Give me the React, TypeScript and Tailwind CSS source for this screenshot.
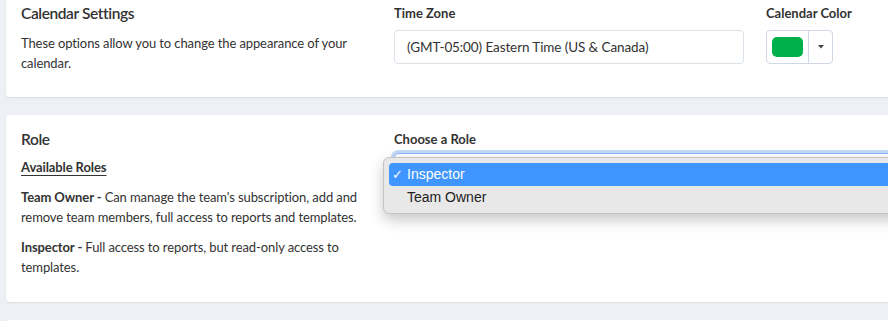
import React from "react";

export default function App() {
  return (
    <div className="w-[888px] h-[321px] overflow-hidden bg-[#edf0f4] text-[#363636] font-['Lato','Noto_Sans',sans-serif]">
      <div className="ml-[6px] w-[940px] flex flex-col gap-[18px] -mt-[20px]">
        {/* Calendar Settings card */}
        <div className="bg-white rounded-[4px] shadow-[0_1px_2px_rgba(0,0,0,0.08)] pt-[21px] pb-[24px] flex">
          <div className="w-[373px] pl-[15px]">
            <div className="text-[15.5px] leading-[24px] font-semibold tracking-[-0.4px] text-[#333]">Calendar Settings</div>
            <div className="mt-[8px] text-[13px] leading-[20px] tracking-[-0.1px] text-[#333]">
              <div className="whitespace-nowrap">These options allow you to change the appearance of your</div>
              <div className="whitespace-nowrap">calendar.</div>
            </div>
          </div>
          <div className="ml-[15px] w-[350px]">
            <div className="text-[13px] leading-[24px] font-bold text-[#333]">Time Zone</div>
            <div className="mt-[5px] h-[34px] border border-[#dce2e9] rounded-[4px] flex items-center pl-[12px] text-[13.5px] tracking-[-0.1px] text-[#333]">
              (GMT-05:00) Eastern Time (US &amp; Canada)
            </div>
          </div>
          <div className="ml-[22px]">
            <div className="text-[13px] leading-[24px] font-bold text-[#333]">Calendar Color</div>
            <div className="mt-[5px] h-[34px] w-[67px] border border-[#cfd8e3] rounded-[4px] flex items-center">
              <div className="ml-[5px] w-[31px] h-[20px] rounded-[5px] bg-[#00b04a]"></div>
              <div className="ml-[5px] h-full w-px bg-[#cfd8e3]"></div>
              <div className="flex-1 flex justify-center">
                <svg width="6" height="4" viewBox="0 0 6 4"><path d="M0 0 L6 0 L3 3.5 Z" fill="#444" /></svg>
              </div>
            </div>
          </div>
        </div>

        {/* Role card */}
        <div className="bg-white rounded-[4px] shadow-[0_1px_2px_rgba(0,0,0,0.08)] pt-[12px] pb-[25px] flex">
          <div className="w-[373px] pl-[15px]">
            <div className="text-[15.5px] leading-[24px] font-semibold tracking-[-0.4px] text-[#333]">Role</div>
            <div className="mt-[6px] text-[13px] leading-[20px] tracking-[-0.1px] text-[#333]">
              <div className="font-bold underline underline-offset-[3px]">Available Roles</div>
              <div className="mt-[10px]">
                <div className="whitespace-nowrap"><b>Team Owner -</b> Can manage the team's subscription, add and</div>
                <div className="whitespace-nowrap">remove team members, full access to reports and templates.</div>
              </div>
              <div className="mt-[10px]">
                <div className="whitespace-nowrap"><b>Inspector -</b> Full access to reports, but read-only access to</div>
                <div className="whitespace-nowrap">templates.</div>
              </div>
            </div>
          </div>
          <div className="ml-[15px] flex-1 relative">
            <div className="text-[13px] leading-[24px] font-bold text-[#333]">Choose a Role</div>
            <div className="mt-[2px] h-[34px] border border-[#86b7fe] rounded-[4px] shadow-[0_0_0_3px_rgba(120,170,235,0.45)]"></div>
            {/* Native select popup */}
            <div className="absolute left-[-11px] top-[30px] w-[600px] h-[57px] bg-[#e8e8e8] border border-[#c4c4c4] rounded-[6px] shadow-[0_6px_14px_rgba(0,0,0,0.22)] pt-[5px] px-[5px] font-['Liberation_Sans',Arial,sans-serif] text-[14px]">
              <div className="h-[23px] rounded-[4px] bg-[#3f96fe] text-white flex items-center">
                <span className="w-[18px] pl-[3px] text-[13px]">✓</span>
                <span>Inspector</span>
              </div>
              <div className="h-[23px] flex items-center pl-[18px] text-[#222]">Team Owner</div>
            </div>
          </div>
        </div>

        <div className="bg-white rounded-[4px] h-[100px]"></div>
      </div>
    </div>
  );
}
